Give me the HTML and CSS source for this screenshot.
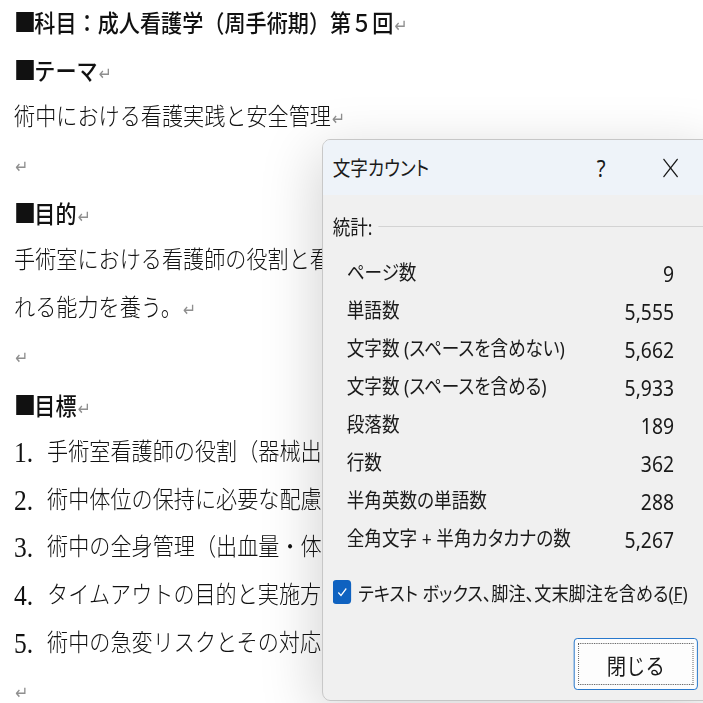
FILE: index.html
```html
<!DOCTYPE html>
<html lang="ja">
<head>
<meta charset="utf-8">
<title>文字カウント</title>
<link rel="stylesheet" href="styles.css">
</head>
<body>
<div class="page">
  <div class="doc">
    <p class="line head"><span class="sq">■</span>科目：成人看護学（周手術期）第５回<span class="pm">↵</span></p>
    <p class="line head"><span class="sq">■</span>テーマ<span class="pm">↵</span></p>
    <p class="line">術中における看護実践と安全管理<span class="pm">↵</span></p>
    <p class="line"><span class="pm">↵</span></p>
    <p class="line head"><span class="sq">■</span>目的<span class="pm">↵</span></p>
    <p class="line">手術室における看護師の役割と看護の実際を理解し、安全な看護を実践するために求めら</p>
    <p class="line">れる能力を養う。<span class="pm">↵</span></p>
    <p class="line"><span class="pm">↵</span></p>
    <p class="line head"><span class="sq">■</span>目標<span class="pm">↵</span></p>
    <ol class="goals">
      <li class="line"><span class="num">1.</span>手術室看護師の役割（器械出し・外回り）を説明できる。<span class="pm">↵</span></li>
      <li class="line"><span class="num">2.</span>術中体位の保持に必要な配慮を理解できる。<span class="pm">↵</span></li>
      <li class="line"><span class="num">3.</span>術中の全身管理（出血量・体温・輸液管理）を理解できる。<span class="pm">↵</span></li>
      <li class="line"><span class="num">4.</span>タイムアウトの目的と実施方法を説明できる。<span class="pm">↵</span></li>
      <li class="line"><span class="num">5.</span>術中の急変リスクとその対応を理解できる。<span class="pm">↵</span></li>
    </ol>
    <p class="line"><span class="pm">↵</span></p>
  </div>

  <div class="dialog">
    <div class="titlebar">
      <span class="title">文字カウント</span>
      <span class="help">?</span>
      <svg class="close" width="20" height="22" viewBox="0 0 20 22"><path d="M2 2 L18 20 M18 2 L2 20" stroke="#1a1a1a" stroke-width="1.3" fill="none"/></svg>
    </div>
    <div class="body">
      <div class="group"><span>統計:</span><span class="rule"></span></div>
      <div class="stats">
        <div class="row"><span>ページ数</span><span class="val">9</span></div>
        <div class="row"><span>単語数</span><span class="val">5,555</span></div>
        <div class="row"><span>文字数 (スペースを含めない)</span><span class="val">5,662</span></div>
        <div class="row"><span>文字数 (スペースを含める)</span><span class="val">5,933</span></div>
        <div class="row"><span>段落数</span><span class="val">189</span></div>
        <div class="row"><span>行数</span><span class="val">362</span></div>
        <div class="row"><span>半角英数の単語数</span><span class="val">288</span></div>
        <div class="row"><span>全角文字 + 半角カタカナの数</span><span class="val">5,267</span></div>
      </div>
      <label class="check">
        <span class="box"><svg width="14" height="14" viewBox="0 0 14 14"><path d="M2.5 7.5 L5.5 10.5 L11.5 3.5" stroke="#fff" stroke-width="1.4" fill="none"/></svg></span>
        <span class="check-text">テキスト ボックス、脚注、文末脚注を含める(<u>F</u>)</span>
      </label>
      <div class="actions">
        <button class="btn"><span class="focus">閉じる</span></button>
      </div>
    </div>
  </div>
</div>
</body>
</html>
```
FILE: styles.css
```css
html, body {
  margin: 0;
  padding: 0;
  background: #ffffff;
  overflow: hidden;
  width: 703px;
  height: 703px;
}

.page {
  position: relative;
  width: 799px;
  height: 703px;
  transform: scaleX(0.88);
  transform-origin: 0 0;
}

.doc {
  margin-top: -2px;
  padding-left: 16px;
  font-family: "Liberation Serif", "Noto Sans CJK JP", serif;
  font-size: 24px;
  font-weight: 300;
  color: #111;
}

.line {
  margin: 0;
  height: 47.86px;
  line-height: 47.86px;
  white-space: nowrap;
}

.head {
  font-weight: 500;
}

.sq {
  font-family: "Noto Sans CJK JP", sans-serif;
  display: inline-block;
  width: 24px;
  margin-right: -1px;
  font-size: 25px;
}

.pm {
  font-family: "DejaVu Sans", sans-serif;
  font-size: 18px;
  font-weight: 400;
  color: #8f8f8f;
  margin-left: 1px;
}

.goals {
  list-style: none;
  margin: 0;
  padding: 0;
}

.goals .line {
  display: flex;
  align-items: center;
}

.num {
  display: inline-block;
  width: 37.5px;
  font-family: "Liberation Serif", serif;
  font-size: 29px;
}

.dialog {
  position: absolute;
  left: 366px;
  top: 141px;
  width: 450px;
  height: 560px;
  background: #f0f0f0;
  border: 1px solid #c4c4c4;
  border-radius: 9px;
  box-shadow: -6px 12px 60px rgba(0, 0, 0, 0.17);
  overflow: hidden;
  font-family: "Noto Sans", "Noto Sans CJK JP", sans-serif;
  font-feature-settings: "palt";
  color: #1a1a1a;
}

.titlebar {
  height: 55px;
  background: #eef3f9;
  display: flex;
  align-items: center;
  padding-left: 11px;
  font-size: 20px;
}

.title {
  width: 273px;
}

.help {
  width: 64px;
  text-align: center;
  font-size: 23px;
}

.close {
  margin-left: 37px;
}

.body {
  padding: 14px 0 0 11px;
  font-size: 20px;
}

.group {
  display: flex;
  align-items: center;
  height: 34px;
}

.rule {
  flex: 1;
  height: 1px;
  background: #d3d3d3;
  margin-left: 7px;
  margin-right: 4px;
}

.stats {
  padding-top: 11px;
  padding-left: 16px;
  width: 372px;
}

.row {
  display: flex;
  justify-content: space-between;
  height: 38px;
  line-height: 38px;
}

.val {
  font-size: 22px;
}

.check {
  display: flex;
  align-items: center;
  margin-top: 20px;
  height: 28px;
}

.check-text {
  font-size: 19.5px;
}

.box {
  width: 21px;
  height: 24px;
  background: #0f62c0;
  border-radius: 4px;
  display: flex;
  align-items: center;
  justify-content: center;
  margin-right: 8px;
}

.actions {
  margin-top: 32px;
  padding-left: 274px;
}

.btn {
  width: 141px;
  height: 52px;
  background: #fdfdfd;
  border: 1px solid #1a6fc9;
  border-radius: 4px;
  padding: 4px;
  font-family: "Noto Sans", "Noto Sans CJK JP", sans-serif;
  font-size: 22px;
  color: #1a1a1a;
  display: flex;
}

.focus {
  flex: 1;
  border: 1px dotted #555;
  display: flex;
  align-items: center;
  justify-content: center;
}
```
